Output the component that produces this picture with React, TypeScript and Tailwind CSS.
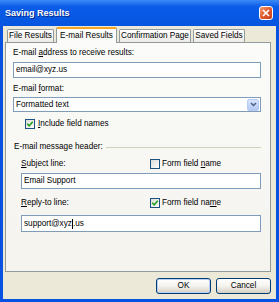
export default function App() {
  const Check = () => (
    <svg width="8" height="8" viewBox="0 0 8 8">
      <path d="M1.2 3.8 L3.2 5.8 L6.8 1.8" stroke="#21a121" strokeWidth="1.6" fill="none" />
    </svg>
  );
  const Box = ({ checked }: { checked?: boolean }) => (
    <div className="w-[10px] h-[10px] border border-[#1c5180] bg-linear-to-br from-[#dcdcd7] to-white flex items-center justify-center shrink-0">
      {checked ? <Check /> : null}
    </div>
  );
  return (
    <div className="w-[279px] h-[302px] bg-[#0752e0] flex flex-col font-['Liberation_Sans',Arial,sans-serif] text-[8.2px] leading-[10px] text-black overflow-hidden whitespace-nowrap">
      <div className="h-[26px] shrink-0 flex items-center justify-between pl-[5px] pr-[6px] bg-linear-to-b from-[#3b8af6] via-[#0b5ce8] via-25% to-[#0555e0]">
        <span className="text-white font-bold text-[9px] [text-shadow:1px_1px_0_#0a2a8c]">Saving Results</span>
        <div className="w-[14px] h-[14px] rounded-[3px] border border-white bg-linear-to-br from-[#f09a72] via-[#e0582d] to-[#c8401a] flex items-center justify-center">
          <svg width="8" height="8" viewBox="0 0 8 8">
            <path d="M1 1 L7 7 M7 1 L1 7" stroke="white" strokeWidth="1.7" />
          </svg>
        </div>
      </div>
      <div className="flex-1 mx-[3px] mb-[3px] bg-[#ECE9D8] flex flex-col pl-[2px] pr-[5px] pt-[1px]">
        <div className="h-[15px] flex items-end pl-[2px] gap-[2px]">
          <div className="w-[47px] h-[13px] border border-b-0 border-[#919b9c] rounded-t-[2px] bg-linear-to-b from-white to-[#ecebe6] flex items-center justify-center">File Results</div>
          <div className="relative z-10 w-[61px] h-[16px] -mb-[1px] border-x border-[#919b9c] border-t-2 border-t-[#f5a623] rounded-t-[2px] bg-[#fbfbf9] flex items-center justify-center">E-mail Results</div>
          <div className="w-[72px] h-[13px] border border-b-0 border-[#919b9c] rounded-t-[2px] bg-linear-to-b from-white to-[#ecebe6] flex items-center justify-center">Confirmation Page</div>
          <div className="w-[52px] h-[13px] border border-b-0 border-[#919b9c] rounded-t-[2px] bg-linear-to-b from-white to-[#ecebe6] flex items-center justify-center">Saved Fields</div>
        </div>
        <div className="h-[230px] border border-[#919b9c] bg-linear-to-b from-[#fbfbf9] to-[#f4f3ee] flex flex-col pl-[7px] pr-[9px]">
          <div className="mt-[5px]">E-mail <span className="underline">a</span>ddress to receive results:</div>
          <div className="mt-[4px] h-[16px] border border-[#7f9db9] bg-white flex items-center pl-[2px]">email@xyz.us</div>
          <div className="mt-[6px]">E-mail <span className="underline">f</span>ormat:</div>
          <div className="mt-[3px] h-[15px] border border-[#7f9db9] bg-white flex items-center justify-between pl-[2px] pr-[1px]">
            <span>Formatted text</span>
            <div className="w-[12px] h-[12px] rounded-[2px] bg-linear-to-b from-[#d8e4fc] to-[#b2c8f5] border border-[#b8cbf3] flex items-center justify-center">
              <svg width="7" height="5" viewBox="0 0 7 5">
                <path d="M1 1 L3.5 3.5 L6 1" stroke="#4d6185" strokeWidth="1.5" fill="none" />
              </svg>
            </div>
          </div>
          <div className="mt-[7px] ml-[12px] flex items-center gap-[3px]">
            <Box checked />
            <span><span className="underline">I</span>nclude field names</span>
          </div>
          <div className="mt-[13px] flex items-center gap-[3px]">
            <span className="ml-[1px]">E-mail message header:</span>
            <div className="flex-1 h-px bg-[#d0d0bf]" />
          </div>
          <div className="ml-[8px] flex flex-col">
            <div className="mt-[7px] flex items-center">
              <span className="w-[129px]"><span className="underline">S</span>ubject line:</span>
              <Box />
              <span className="ml-[2px]">Form field <span className="underline">n</span>ame</span>
            </div>
            <div className="mt-[4px] h-[16px] border border-[#7f9db9] bg-white flex items-center pl-[2px]">Email Support</div>
            <div className="mt-[9px] flex items-center">
              <span className="w-[129px]"><span className="underline">R</span>eply-to line:</span>
              <Box checked />
              <span className="ml-[2px]">Form field na<span className="underline">m</span>e</span>
            </div>
            <div className="mt-[7px] h-[17px] border border-[#7f9db9] bg-white flex items-center pl-[2px]">
              <span>support@xyz</span>
              <span className="w-px h-[10px] bg-black" />
              <span>.us</span>
            </div>
          </div>
        </div>
        <div className="mt-[6px] flex justify-end gap-[5px]">
          <div className="w-[55px] h-[16px] border border-[#003c74] rounded-[3px] bg-linear-to-b from-white via-[#f4f3ee] to-[#d6d0c5] shadow-[inset_0_0_0_1px_#b8d0f5] flex items-center justify-center">OK</div>
          <div className="w-[55px] h-[16px] border border-[#003c74] rounded-[3px] bg-linear-to-b from-white via-[#f4f3ee] to-[#d6d0c5] flex items-center justify-center">Cancel</div>
        </div>
      </div>
    </div>
  );
}
